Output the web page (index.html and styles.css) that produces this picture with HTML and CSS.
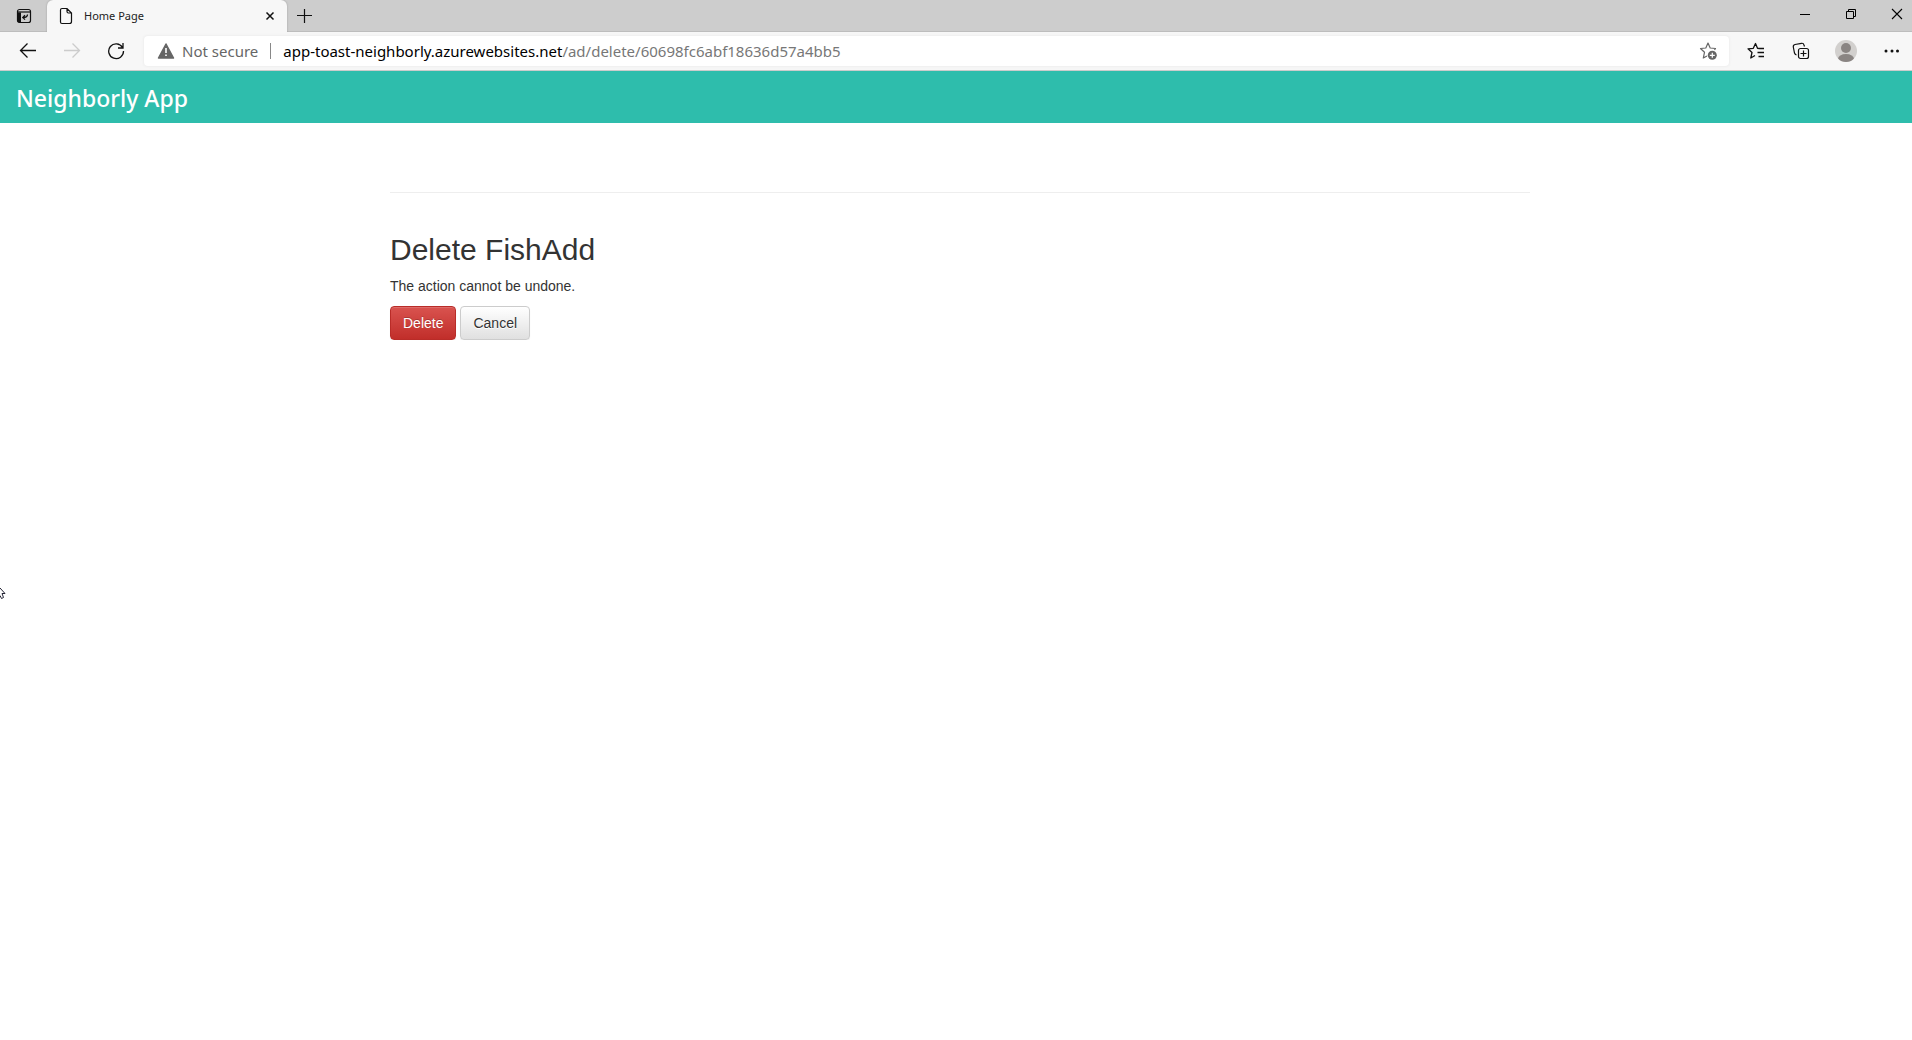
FILE: index.html
```html
<!DOCTYPE html>
<html lang="en">
<head>
<meta charset="utf-8">
<title>Home Page</title>
<link rel="stylesheet" href="styles.css">
</head>
<body>
<div class="browser">
  <div class="tab-strip">
    <button class="tab-actions" aria-label="Tab actions">
      <svg width="16" height="16" viewBox="0 0 16 16"><rect x="1.5" y="1.5" width="13" height="13" rx="2" fill="none" stroke="#111" stroke-width="1.200"/><path d="M1.500 4.500V13Q1.500 14.500 3 14.500H5V4.500z" fill="#111"/><path d="M1.500 4H14.500" stroke="#111" stroke-width="1.200"/><path d="M11.500 6.500Q11.500 9.500 7 9.500M9 7.300L6.800 9.500L9 11.600" fill="none" stroke="#111" stroke-width="1.300"/></svg>
    </button>
    <div class="tab">
      <svg width="14" height="18" viewBox="0 0 14 18" fill="none" stroke="#111" stroke-width="1.200"><path d="M3 1.500H8L12.500 6V14.500Q12.500 16.500 10.500 16.500H3Q1.500 16.500 1.500 15V3Q1.500 1.500 3 1.500zM8 1.500V4.500Q8 6 9.500 6H12.500"/></svg>
      <span class="tab-title">Home Page</span>
      <button class="tab-close" aria-label="Close tab"><svg width="10" height="10" viewBox="0 0 10 10"><path d="M1.500 1.500L8.500 8.500M8.500 1.500L1.500 8.500" stroke="#111" stroke-width="1.500"/></svg></button>
    </div>
    <button class="new-tab" aria-label="New tab"><svg width="16" height="16" viewBox="0 0 16 16"><path d="M8.500 1V15M1 7.500H16" stroke="#111" stroke-width="1.200"/></svg></button>
    <div class="window-controls">
      <button aria-label="Minimize"><svg width="12" height="12" viewBox="0 0 12 12"><path d="M1 6.500H11" stroke="#000"/></svg></button>
      <button aria-label="Restore"><svg width="12" height="12" viewBox="0 0 12 12"><path d="M1.500 3.500H8.500V10.500H1.500zM3.500 3.500V1.500H10.500V8.500H8.500" fill="none" stroke="#000"/></svg></button>
      <button aria-label="Close"><svg width="12" height="12" viewBox="0 0 12 12"><path d="M1 1L11 11M11 1L1 11" stroke="#000" stroke-width="1.100"/></svg></button>
    </div>
  </div>
  <div class="toolbar">
    <div class="nav-buttons">
      <button aria-label="Back"><svg width="18" height="18" viewBox="0 0 18 18" fill="none" stroke="#111" stroke-width="1.300"><path d="M17 8.500H1.500M8.500 1.500L1.500 8.500L8.500 15.500"/></svg></button>
      <button aria-label="Forward" disabled><svg width="18" height="18" viewBox="0 0 18 18" fill="none" stroke="#ccc" stroke-width="1.300"><path d="M1 8.500H16.500M9.500 1.500L16.500 8.500L9.500 15.500"/></svg></button>
      <button aria-label="Refresh"><svg width="18" height="18" viewBox="0 0 18 18" fill="none" stroke="#111" stroke-width="1.300"><path d="M15.500 5.500A7.400 7.400 0 1 0 16.500 9M16 1V6H11"/></svg></button>
    </div>
    <div class="address-bar">
      <button class="security"><svg width="18" height="16" viewBox="0 0 18 16"><path d="M9 1L16.500 15H1.500z" fill="#666" stroke="#666" stroke-width="1.500" stroke-linejoin="round"/><path d="M9 5V10M9 11.500V13" stroke="#fff" stroke-width="1.600"/></svg><span>Not secure</span></button>
      <a class="url" href="#"><span class="host">app-toast-neighborly.azurewebsites.net</span>/ad/delete/60698fc6abf18636d57a4bb5</a>
      <button class="add-favorite" aria-label="Add to favorites"><svg width="18" height="18" viewBox="0 0 18 18"><path d="M15.500 8L16.500 6.500L11.200 6L9 1L6.800 6L1.500 6.500L5.500 10.300L4.300 16L8 14" fill="none" stroke="#666" stroke-width="1.200" stroke-linejoin="round"/><circle cx="13.300" cy="13.300" r="4.500" fill="#666"/><path d="M13.300 10.800V15.800M10.800 13.300H15.800" stroke="#fff" stroke-width="1.200"/></svg></button>
    </div>
    <div class="tools">
      <button aria-label="Favorites"><svg width="18" height="18" viewBox="0 0 18 18" fill="none" stroke="#111" stroke-width="1.300" stroke-linejoin="round"><path d="M12.500 6.500L10.500 6.300L8.500 1.500L6.300 6.300L1 6.800L5 10.500L3.800 16L8 13.500M11.500 6.500H17M10.500 10.500H17M11.500 14.500H17"/></svg></button>
      <button aria-label="Collections"><svg width="18" height="18" viewBox="0 0 18 18" fill="none" stroke="#111" stroke-width="1.200"><rect x="6.500" y="6.500" width="10" height="10" rx="2"/><path d="M11.500 8.500V14.500M8.500 11.500H14.500M4.500 13Q3 12.500 2.500 11L1.300 5Q1 3 3 2.500L9.500 1.300Q11.500 1 12 3L12.500 4.500"/></svg></button>
      <button aria-label="Profile"><svg width="22" height="22" viewBox="0 0 22 22"><defs><clipPath id="avatar"><circle cx="11" cy="11" r="11"/></clipPath></defs><g clip-path="url(#avatar)"><rect width="22" height="22" fill="#d2d0ce"/><circle cx="11" cy="8" r="5" fill="#8a8583"/><ellipse cx="11" cy="19" rx="8" ry="5" fill="#8a8583"/></g></svg></button>
      <button aria-label="Settings and more"><svg width="18" height="4" viewBox="0 0 18 4" fill="#111"><circle cx="4" cy="2" r="1.500"/><circle cx="10" cy="2" r="1.500"/><circle cx="15.500" cy="2" r="1.500"/></svg></button>
    </div>
  </div>
</div>
<header class="site-header"><a href="#">Neighborly App</a></header>
<main class="page">
  <div class="container">
    <hr>
    <h2>Delete FishAdd</h2>
    <p>The action cannot be undone.</p>
    <form class="actions">
      <button type="button" class="btn btn-danger">Delete</button>
      <button type="button" class="btn btn-default">Cancel</button>
    </form>
  </div>
</main>
<svg class="cursor" width="6" height="15" viewBox="0 0 6 15"><path d="M0 3L5 8.500H2L3.500 12.500L1.500 13.500L0 10.500" fill="#fff" stroke="#223" stroke-width="1"/></svg>
</body>
</html>
```
FILE: styles.css
```css
* { box-sizing: border-box; }
body {
  margin: 0;
  background: #fff;
  color: #333;
  font: 14px/20px "Liberation Sans", Arial, sans-serif;
}
a { color: inherit; text-decoration: none; }
.browser { font-family: "Noto Sans", "Open Sans", sans-serif; }
.browser button {
  display: flex;
  align-items: center;
  justify-content: center;
  padding: 0;
  border: 0;
  background: none;
  color: inherit;
  font: inherit;
}
svg { display: block; flex: none; }

.tab-strip {
  display: flex;
  height: 32px;
  background: #cdcdcd;
  box-shadow: inset 0 -1px #bdbdbd;
}
.browser .tab-actions { width: 47px; }
.tab {
  display: flex;
  align-items: center;
  gap: 11px;
  width: 240px;
  padding: 0 12px;
  border-radius: 6px 6px 0 0;
  background: #f7f7f7;
  box-shadow: 0 0 2px #999;
  clip-path: inset(0 -3px);
}
.tab-title { flex: 1; color: #222; font-size: 11px; }
.browser .new-tab { width: 34px; }
.window-controls { display: flex; margin-left: auto; padding-bottom: 4px; }
.browser .window-controls button { width: 46px; }
.window-controls { margin-right: -8px; }

.toolbar {
  display: flex;
  align-items: center;
  height: 39px;
  border-bottom: 1px solid #ccc;
  background: #f7f7f7;
}
.nav-buttons { display: flex; padding: 0 6px; }
.browser .nav-buttons button { width: 44px; height: 30px; }
.address-bar {
  display: flex;
  flex: 1;
  align-items: center;
  height: 30px;
  padding: 0 12px 0 13px;
  border-radius: 4px;
  background: #fff;
  box-shadow: 0 0 3px #e4e4e4;
  font-size: 15px;
}
.browser .security {
  gap: 7px;
  padding-right: 12px;
  border-right: 1px solid #888;
  color: #666;
  line-height: 16px;
}
.url { flex: 1; padding-left: 12px; color: #777; }
.host { color: #000; }
.tools { display: flex; padding-left: 4px; margin-right: -1px; }
.browser .tools button { width: 45px; height: 30px; }

.site-header {
  padding: 11px 16px 9px;
  background: #2ebdac;
  color: #fff;
  font: 500 23px/32px "Noto Sans", "Open Sans", sans-serif;
}

.page { padding: 0 16px 0 24px; overflow: hidden; }
.container { max-width: 1140px; margin: 0 auto; }
hr { margin: 69px 0 40px; border: 0; border-top: 1px solid #eee; }
h2 { margin: 0 0 10px; font-size: 30px; font-weight: 500; line-height: 33px; }
p { margin: 0 0 10px; }
.actions { display: flex; gap: 4px; }
.btn {
  padding: 6px 12px;
  border: 1px solid #ccc;
  border-radius: 4px;
  font: 14px/20px "Liberation Sans", Arial, sans-serif;
}
.btn-danger {
  border-color: #b92c28;
  background: linear-gradient(#d9534f, #c12e2a);
  box-shadow: inset 0 1px rgba(255, 255, 255, .15), 0 1px 1px rgba(0, 0, 0, .08);
  color: #fff;
  text-shadow: 0 -1px rgba(0, 0, 0, .2);
}
.btn-default {
  background: linear-gradient(#fff, #e0e0e0);
  box-shadow: inset 0 1px rgba(255, 255, 255, .15), 0 1px 1px rgba(0, 0, 0, .08);
  color: #333;
  text-shadow: 0 1px #fff;
}
.cursor { position: absolute; left: 0; top: 585px; }
```
